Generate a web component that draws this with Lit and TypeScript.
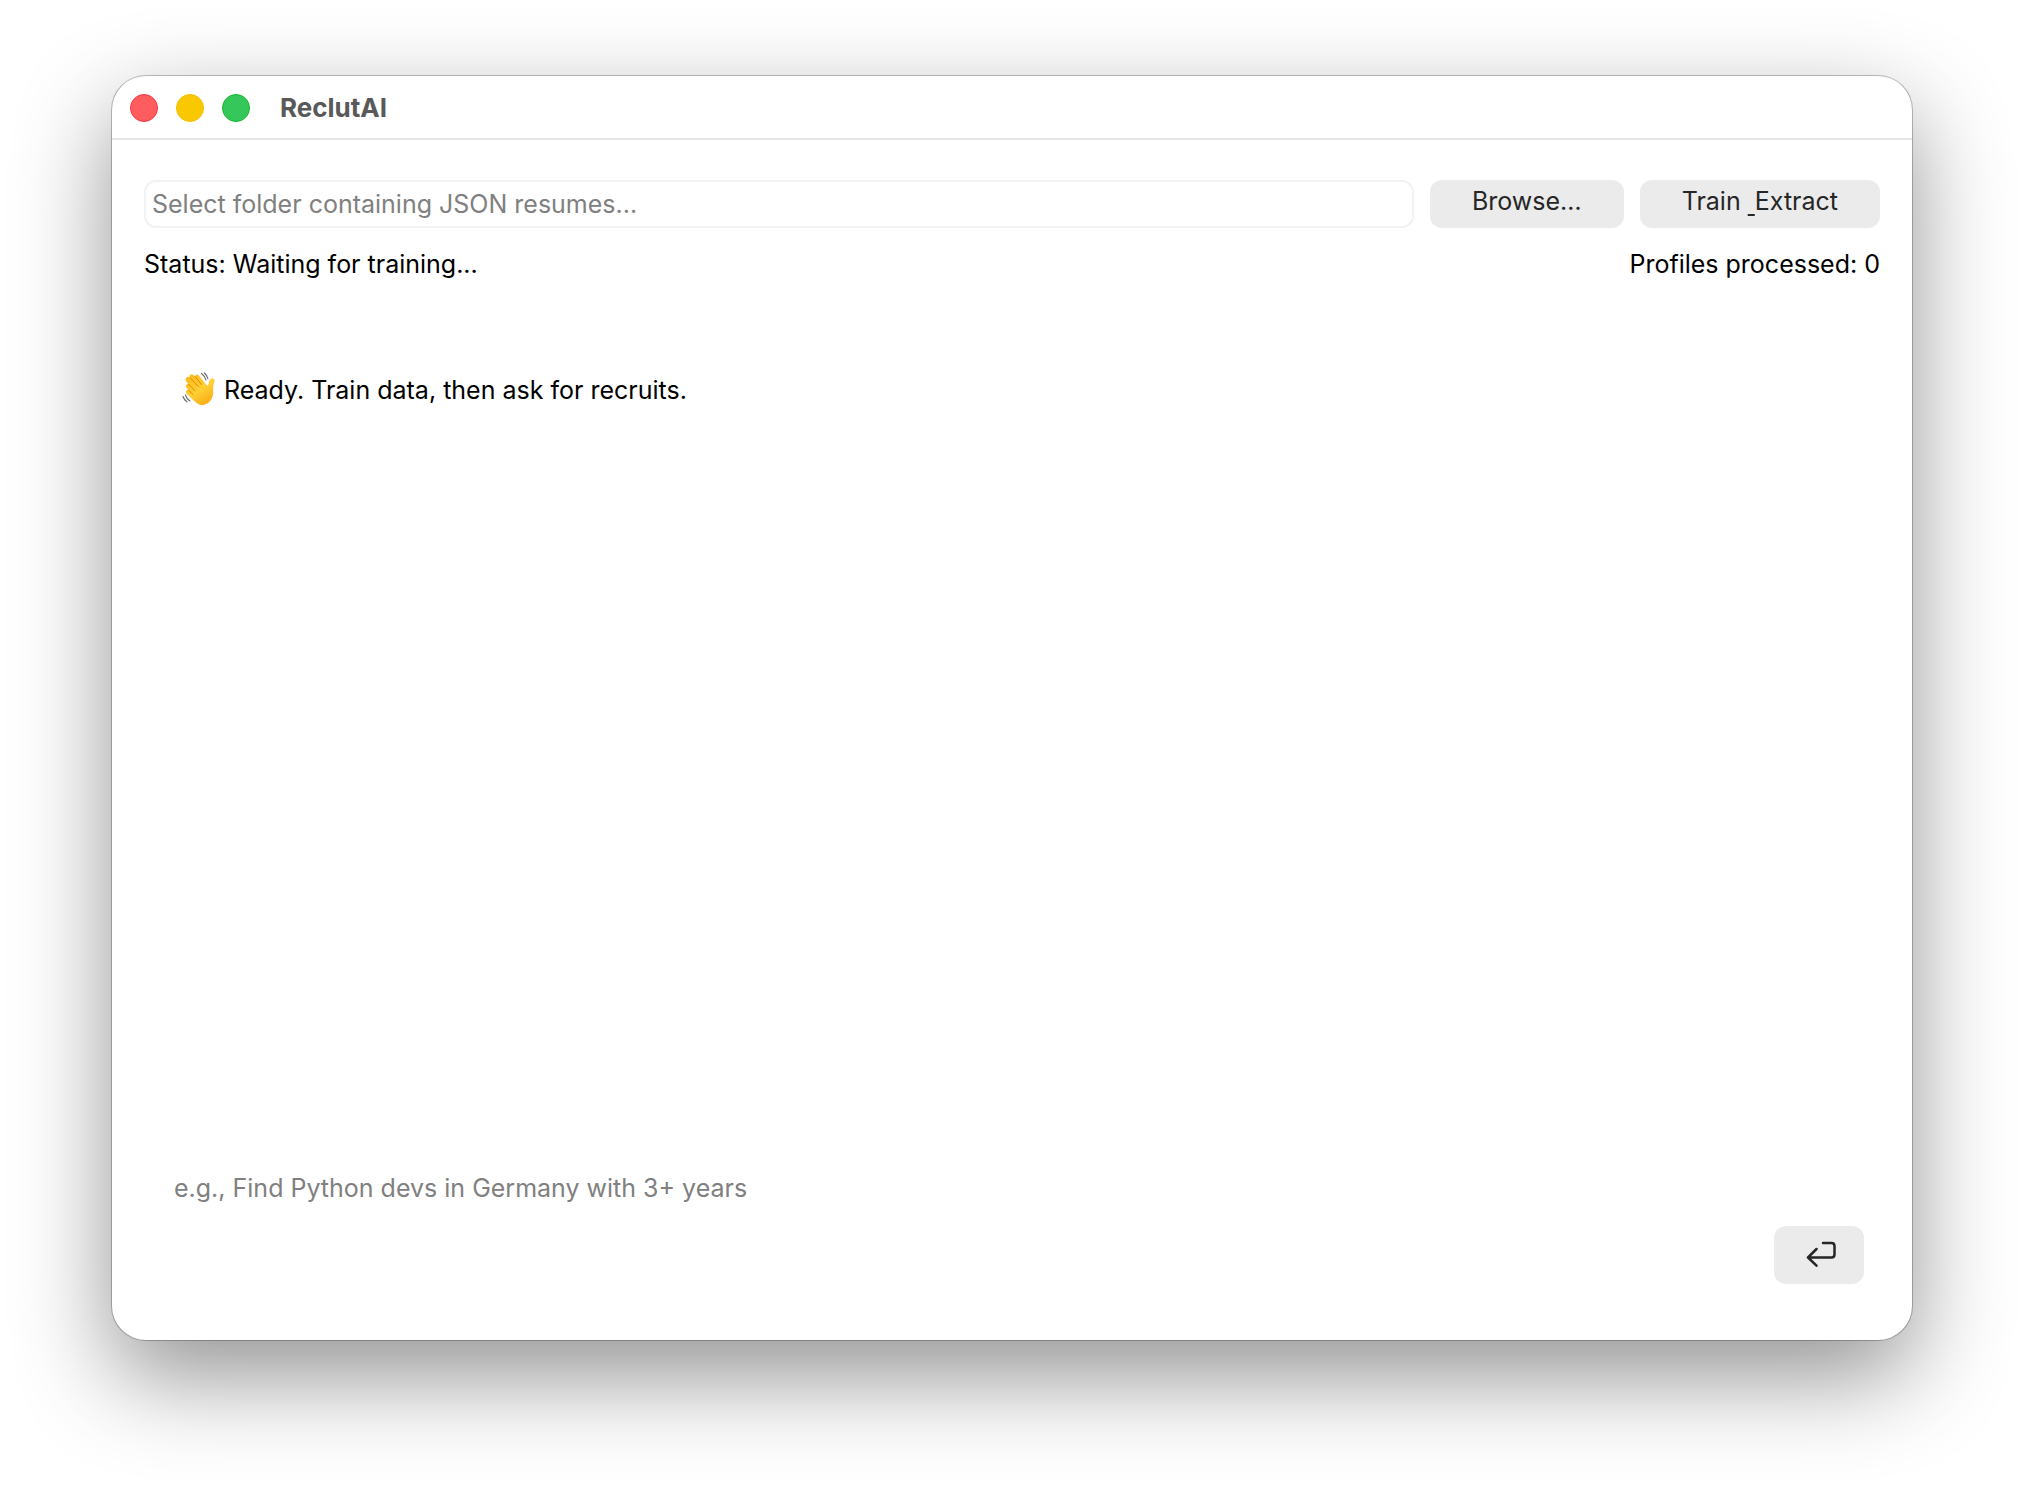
import { LitElement, html, css, svg } from "lit";
import { customElement, property, state } from "lit/decorators.js";

const waveIcon = svg`
  <g fill="none" stroke="#6f6f6f" stroke-width="1.2" stroke-linecap="round">
    <path d="M19.500 1.500c2.200 1.600 3.600 3.600 4.400 6.300M22.500 1c1.700 1.600 2.800 3.400 3.400 5.700"/>
    <path d="M3.400 22.800c.7 2.600 2.200 4.700 4.600 6.200M1 24.500c.7 2.200 2 4 4 5.400"/>
  </g>
  <path fill="url(#skin)" d="M4.600 5.500c1.300-1.200 2.600-.7 3.600.4L7.400 4.300c.4-2 2.600-2.700 4.200-1L13 4.500c.2-2 2.400-2.600 3.900-1l7.300 9.300c.9 1 1.900.9 2.200-.3l.8-3.200c.6-2.400 2.500-3.200 4.300-2.400 1.400.7 1.200 2 .8 3-.9 2.800-1.300 5-1.100 8.200.3 5.200-1 9.600-4.500 12.500-4.300 3.600-9.300 3.200-13.400-.6L4.900 21.900c-1.900-2-.5-4.300 1.500-3.800l-1.900-2.300c-1.600-2.100.1-4.300 2-3.600L4.300 9.400C3.200 7.800 3.300 6.500 4.600 5.500z"/>
  <path fill="none" stroke="#e08a00" stroke-width="1" stroke-linecap="round" d="M8.200 5.900l7.900 8.400M13 4.500l6.500 8M6.500 12.200l6.600 6.500M6.400 18.100l4.600 4.500"/>
`;

@customElement("title-bar")
class TitleBar extends LitElement {
  @property() heading = "";

  static styles = css`
    :host {
      display: block;
    }
    .bar {
      display: flex;
      align-items: center;
      gap: 30px;
      height: 60px;
      padding: 2px 18px 0;
      border-bottom: 2px solid #e5e5e5;
    }
    .lights {
      display: flex;
      gap: 18px;
    }
    .light {
      width: 28px;
      height: 28px;
      padding: 0;
      border-radius: 50%;
      border: 1px solid;
    }
    .close {
      background: #ff5c60;
      border-color: #f9353f;
    }
    .minimise {
      background: #f9c800;
      border-color: #f4be00;
    }
    .zoom {
      background: #35c759;
      border-color: #0fbb2c;
    }
    .heading {
      margin: 0;
      font-size: 26px;
      line-height: 32px;
      font-weight: 700;
      color: #595959;
    }
  `;

  render() {
    return html`
      <header class="bar">
        <div class="lights">
          <button class="light close" aria-label="Close"></button>
          <button class="light minimise" aria-label="Minimise"></button>
          <button class="light zoom" aria-label="Zoom"></button>
        </div>
        <h1 class="heading">${this.heading}</h1>
      </header>
    `;
  }
}

@customElement("app-root")
class AppRoot extends LitElement {
  @state() private status = "Waiting for training...";
  @state() private processed = 0;

  static styles = css`
    :host {
      display: block;
      font-family: Inter, "Liberation Sans", sans-serif;
      font-size: 25px;
      line-height: 32px;
      color: #000;
    }
    .desktop {
      box-sizing: border-box;
      display: flex;
      min-height: 100vh;
      padding: 76px 112px 148px;
      background: #fff;
      overflow: hidden;
    }
    .window {
      flex: 1;
      display: flex;
      flex-direction: column;
      min-width: 0;
      border-radius: 34px;
      background: #fff;
      box-shadow:
        0 0 0 1px rgba(0, 0, 0, 0.24),
        0 36px 96px rgba(0, 0, 0, 0.43);
    }
    .content {
      flex: 1;
      display: flex;
      flex-direction: column;
      padding: 40px 32px 56px;
    }
    .toolbar {
      display: flex;
      gap: 16px;
    }
    .folder {
      flex: 1;
      min-width: 0;
      box-sizing: border-box;
      height: 48px;
      padding: 0 6px;
      border: 2px solid #f2f2f2;
      border-radius: 12px;
      background: #fff;
      font: inherit;
      color: #000;
    }
    .folder::placeholder,
    .prompt::placeholder {
      color: #808080;
      opacity: 1;
    }
    .button {
      box-sizing: border-box;
      height: 48px;
      padding: 0 42px 6px;
      border: 0;
      border-radius: 12px;
      background: #ebebeb;
      font: inherit;
      color: #262626;
      white-space: pre;
    }
    .mnemonic {
      text-decoration: underline;
      text-decoration-thickness: 2px;
      text-underline-offset: 4px;
    }
    .statusline {
      display: flex;
      justify-content: space-between;
      padding-top: 20px;
    }
    .transcript {
      flex: 1;
      padding: 92px 38px 0;
    }
    .message {
      display: flex;
      align-items: center;
      gap: 8px;
      margin: 0;
    }
    .wave {
      width: 34px;
      height: 36px;
    }
    .composer {
      display: flex;
      align-items: flex-start;
      gap: 16px;
      padding: 0 16px 0 30px;
    }
    .prompt {
      flex: 1;
      min-width: 0;
      height: 118px;
      box-sizing: border-box;
      padding: 6px 0;
      border: 0;
      background: transparent;
      font: inherit;
      color: #000;
      resize: none;
    }
    .send {
      align-self: flex-end;
      display: flex;
      align-items: center;
      justify-content: center;
      width: 90px;
      height: 58px;
      padding: 0 0 2px 4px;
      border: 0;
      border-radius: 12px;
      background: #ebebeb;
      color: #262626;
    }
    .return {
      width: 30px;
      height: 26px;
    }
  `;

  render() {
    return html`
      <div class="desktop">
        <div class="window">
          <title-bar heading="ReclutAI"></title-bar>
          <main class="content">
            <div class="toolbar">
              <input class="folder" type="text" aria-label="Resume folder"
                placeholder="Select folder containing JSON resumes..." />
              <button class="button">Browse…</button>
              <button class="button">Train <span class="mnemonic">&nbsp;</span>Extract</button>
            </div>
            <div class="statusline">
              <span>Status: ${this.status}</span>
              <span>Profiles processed: ${this.processed}</span>
            </div>
            <section class="transcript" aria-label="Conversation">
              <p class="message">
                <svg class="wave" viewBox="0 0 34 36" role="img" aria-label="Waving hand">
                  <defs>
                    <linearGradient id="skin" x1="0" y1="0" x2="0.6" y2="1">
                      <stop offset="0" stop-color="#ffb81c"></stop>
                      <stop offset="0.6" stop-color="#ffcf33"></stop>
                      <stop offset="1" stop-color="#f9b01a"></stop>
                    </linearGradient>
                  </defs>
                  ${waveIcon}
                </svg>
                <span>Ready. Train data, then ask for recruits.</span>
              </p>
            </section>
            <div class="composer">
              <textarea class="prompt" aria-label="Request"
                placeholder="e.g., Find Python devs in Germany with 3+ years"></textarea>
              <button class="send" aria-label="Send">
                <svg class="return" viewBox="0 0 30 26" fill="none" stroke="currentColor"
                  stroke-width="2.5" stroke-linecap="round" stroke-linejoin="round">
                  <path d="M17 2h8.500q3 0 3 3v8.500q0 3-3 3H2M10.500 8L2 16.500l8.500 8.200"></path>
                </svg>
              </button>
            </div>
          </main>
        </div>
      </div>
    `;
  }
}
